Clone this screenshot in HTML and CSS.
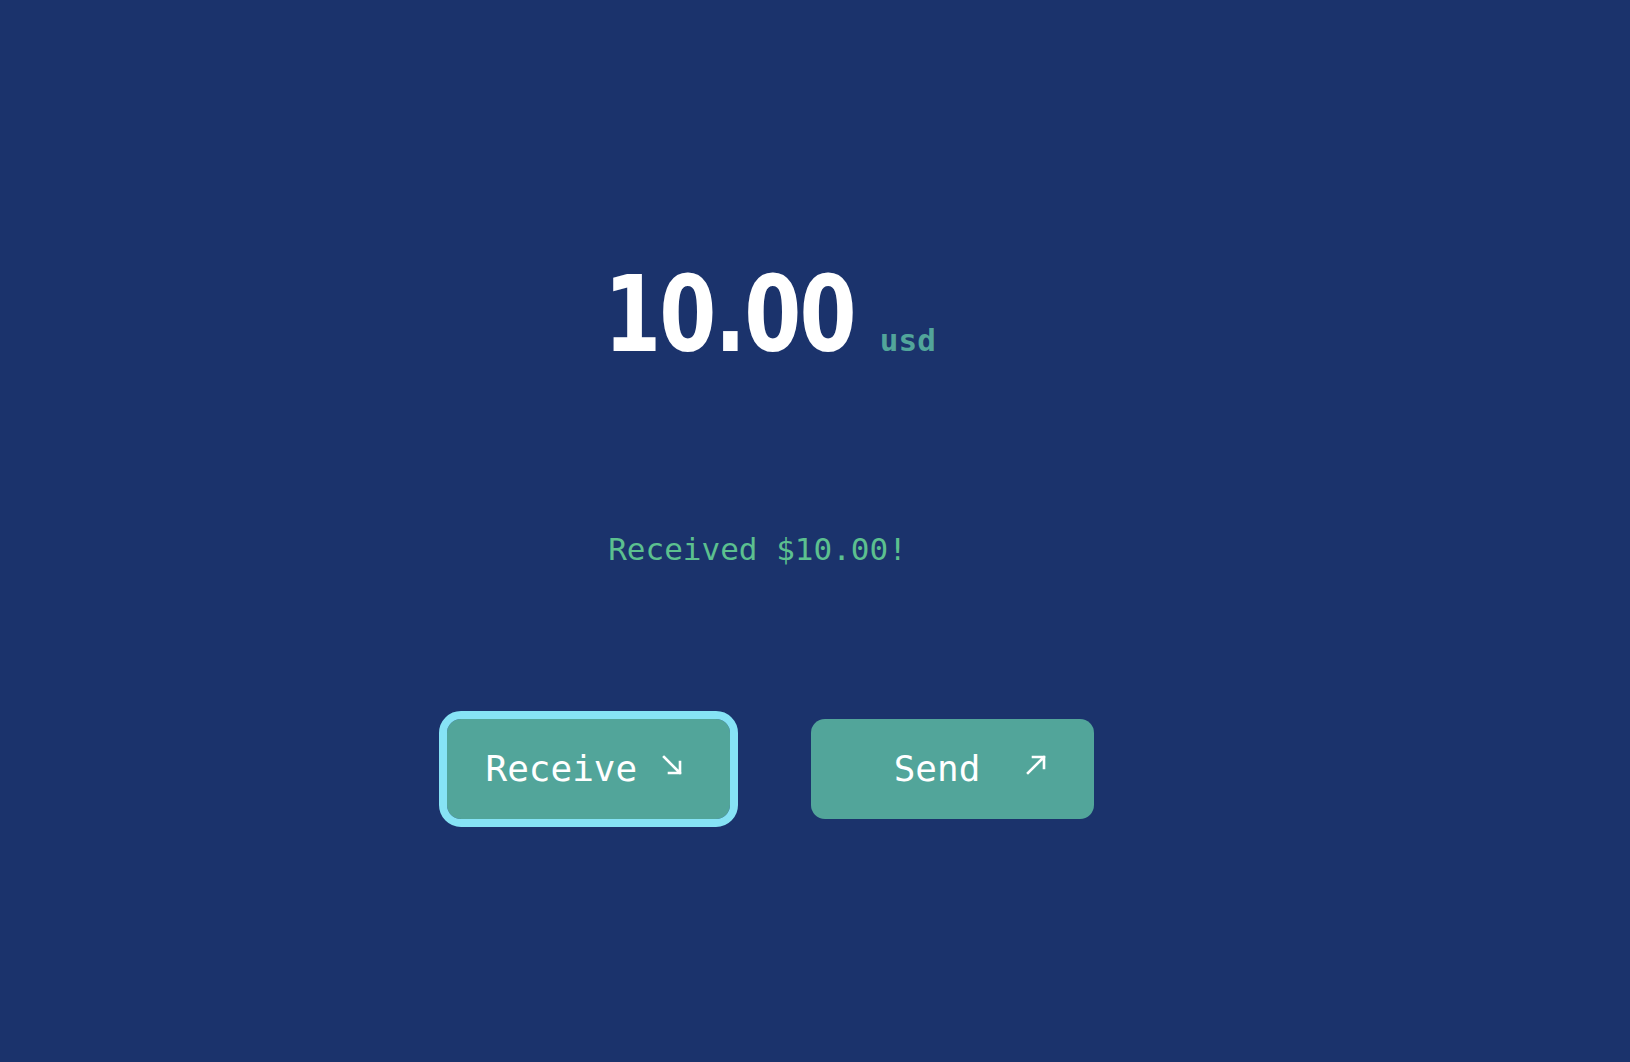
FILE: index.html
```html
<!DOCTYPE html>
<html lang="en">
<head>
<meta charset="utf-8">
<title>Wallet</title>
<link rel="stylesheet" href="styles.css">
</head>
<body>
<main class="wallet">
  <section class="summary">
    <div class="balance">
      <span class="amount">10.00</span>
      <span class="currency">usd</span>
    </div>
    <p class="status">Received $10.00!</p>
  </section>
  <div class="actions">
    <button class="btn btn-focus" type="button">
      <span class="label">Receive</span>
      <svg class="arrow" viewBox="0 0 20 20" width="20" height="20" aria-hidden="true"><path d="M2 2 L18 18 M18 7 L18 18 L7 18" fill="none" stroke="#fff" stroke-width="2.6" stroke-linecap="square"/></svg>
    </button>
    <button class="btn btn-send" type="button">
      <span class="label">Send</span>
      <svg class="arrow" viewBox="0 0 20 20" width="20" height="20" aria-hidden="true"><path d="M2 18 L18 2 M7 2 L18 2 L18 13" fill="none" stroke="#fff" stroke-width="2.6" stroke-linecap="square"/></svg>
    </button>
  </div>
</main>
</body>
</html>
```
FILE: styles.css
```css
html, body {
  margin: 0;
  padding: 0;
  background: #1b336c;
}
body {
  min-height: 100vh;
  padding-right: 90px;
  box-sizing: border-box;
}
.wallet {
  display: flex;
  flex-direction: column;
  align-items: center;
  padding-top: 262px;
}
.summary {
  display: flex;
  flex-direction: column;
  align-items: flex-start;
}
.balance {
  display: flex;
  align-items: baseline;
  gap: 24px;
}
.amount {
  display: inline-block;
  font-family: "DejaVu Sans Condensed", "DejaVu Sans", sans-serif;
  font-weight: 700;
  font-size: 106px;
  line-height: 1;
  color: #ffffff;
  letter-spacing: -2px;
  transform: scaleX(0.86);
  transform-origin: left center;
  margin-right: -40px;
}
.currency {
  font-family: "DejaVu Sans Mono", monospace;
  font-weight: 700;
  font-size: 31px;
  color: #52a59a;
}
.status {
  margin: 166px 0 0 0;
  padding-left: 4px;
  font-family: "DejaVu Sans Mono", monospace;
  font-size: 31px;
  line-height: 1;
  color: #5cc08f;
}
.actions {
  display: flex;
  gap: 81px;
  margin-top: 154px;
}
.btn {
  width: 283px;
  height: 100px;
  box-sizing: border-box;
  border: none;
  border-radius: 14px;
  background: #52a59a;
  color: #ffffff;
  display: flex;
  align-items: center;
  padding: 0 48px 0 39px;
  font-family: "DejaVu Sans Mono", monospace;
  font-size: 36px;
  cursor: pointer;
}
.btn-focus {
  outline: 8px solid #86e3f5;
  outline-offset: 0;
}
.label {
  flex: 1;
  text-align: center;
  line-height: 1;
}
.btn-send .label {
  padding-left: 24px;
}
.arrow {
  flex: none;
  margin-left: 25px;
  margin-bottom: 8px;
}
```
